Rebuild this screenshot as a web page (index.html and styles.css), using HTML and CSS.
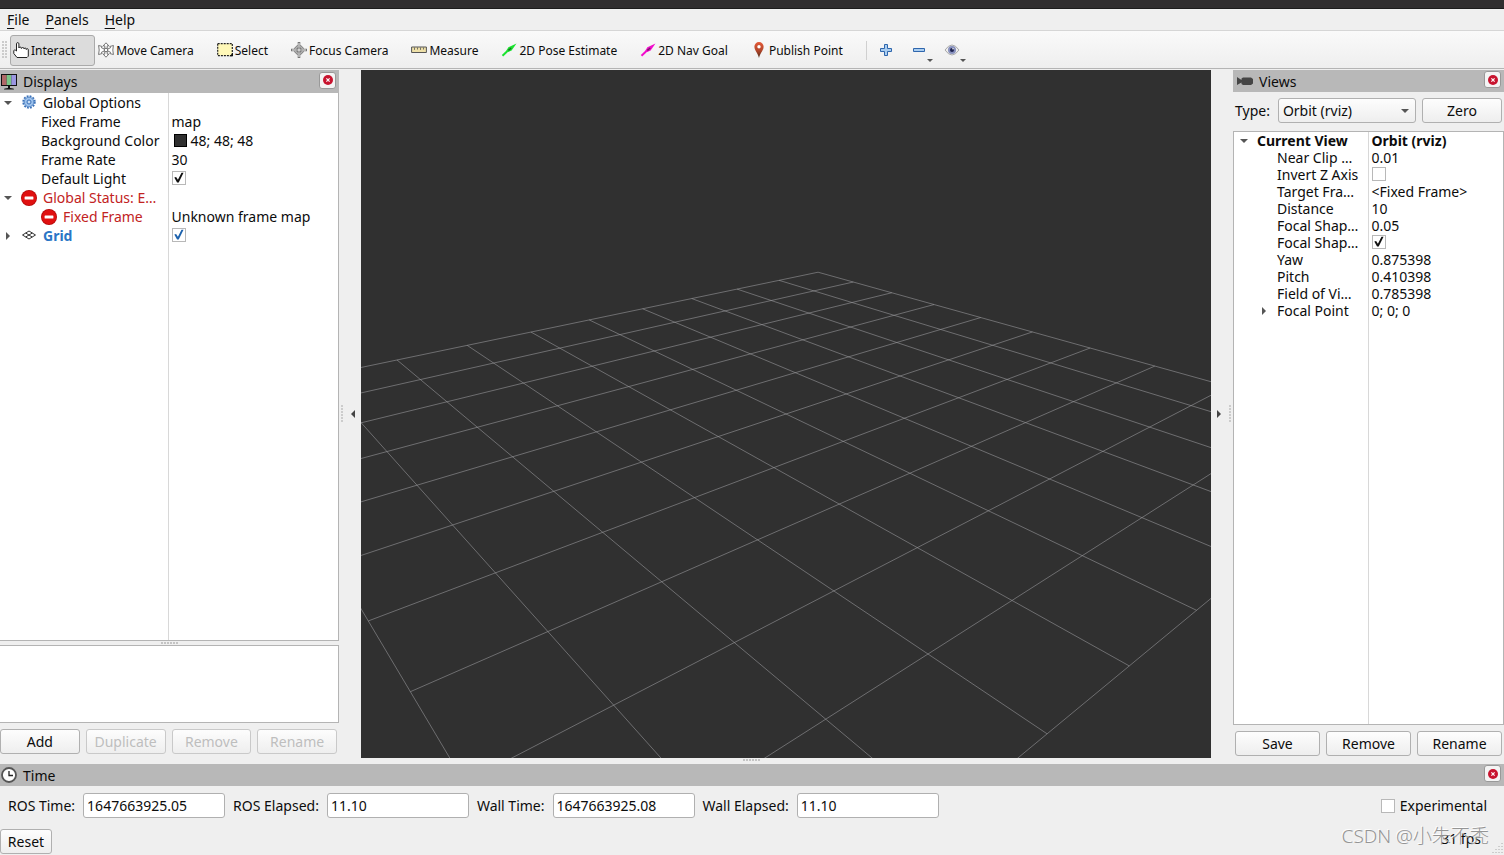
FILE: index.html
```
<!DOCTYPE html>
<html lang="en">
<head>
<meta charset="utf-8">
<title>RViz</title>
<link rel="stylesheet" href="styles.css">
</head>
<body>
<svg width="0" height="0" class="defs" aria-hidden="true">
  <symbol id="close" viewBox="0 0 10 10"><circle cx="5" cy="5" r="5" fill="#c8142f"/><path d="M3.4 3.4l3.2 3.2M6.6 3.4L3.4 6.6" stroke="#fff" stroke-width="1.2"/></symbol>
  <symbol id="stop" viewBox="0 0 16 16"><circle cx="8" cy="8" r="8" fill="#b80a0a"/><circle cx="8" cy="8" r="7.2" fill="#e01010"/><rect x="3.6" y="6.4" width="8.8" height="3.2" rx=".5" fill="#fff"/></symbol>
  <symbol id="arrow" viewBox="0 0 16 16"><path d="M1.500 13.800L7 8.600" stroke="currentColor" stroke-width="2"/><path d="M15.500 1.500L7.400 5.200 5.400 8.600 7.200 10 10.600 8.400z" fill="currentColor"/><path d="M7.400 8.400l2.800-2.400" stroke="#222" stroke-width="1.400" opacity=".6"/></symbol>
</svg>
<div class="topstrip"></div>
<nav class="menubar">
  <button><u>F</u>ile</button><button><u>P</u>anels</button><button><u>H</u>elp</button>
</nav>
<div class="toolbar" role="toolbar">
  <i class="grip"></i>
  <button class="tool active"><svg viewBox="0 0 16 16"><path d="M3.500 9V1.800c0-1.600 2.400-1.600 2.400 0V6c0-1.200 2.500-1.200 2.500 0v.5c0-1.300 2.600-1.300 2.600 0V7c0-1.300 2.300-1.200 2.300 0v.5c0-1.100 2-1 2 0V14.200l-1.300 1.300H4L.8 11.500V8.500c.6-.7 1.800-.6 2.700.5z" fill="#fff" stroke="#222"/></svg>Interact</button>
  <button class="tool"><svg viewBox="0 0 16 16"><g fill="#fff" stroke="#555" stroke-width=".8"><path d="M8 .8l2.800 3H9.200v2.600L8 7 6.800 6.400V3.800H5.200zM8 15.200l2.800-3H9.200V9.600L8 9l-1.200.6v2.600H5.200z"/><path d="M.6 3.500l3.600 1-.8 1.200L7 7.400v1.200l-3.600 1.700.8 1.200-3.600 1 .6-4.500zM15.400 3.500l-3.600 1 .8 1.200L9 7.400v1.200l3.600 1.700-.8 1.200 3.600 1-.6-4.500z"/><circle cx="8" cy="8" r="1.800"/></g></svg>Move Camera</button>
  <button class="tool"><svg viewBox="0 0 16 16"><path d="M.7 1.600h14.600v12H.7z" fill="#fff8b8" stroke="#222" stroke-width="1.200" stroke-dasharray="2 1"/><path d="M12.500 14.200H16v-3.500z" fill="#111"/></svg>Select</button>
  <button class="tool"><svg viewBox="0 0 16 16"><g fill="none" stroke="#777"><circle cx="8" cy="8" r="4.600"/><circle cx="8" cy="8" r="2.200"/><path d="M0 8h16M8 0v16" stroke-width="2.600"/><path d="M1 8h14M8 1v14" stroke="#eee" stroke-width="1"/><path d="M4 6h8M4 10h8M6 4v8M10 4v8" stroke-width=".6"/></g></svg>Focus Camera</button>
  <button class="tool"><svg viewBox="0 0 16 16"><path d="M.6 5h14.800v5.500H.6z" fill="#eee0a8" stroke="#555"/><path d="M3.500 5.500v2.400M6.500 5.500v2M9.500 5.500v2.400M12.500 5.500v2" stroke="#555" stroke-width=".8"/></svg>Measure</button>
  <button class="tool"><svg class="green"><use href="#arrow"/></svg>2D Pose Estimate</button>
  <button class="tool"><svg class="pink"><use href="#arrow"/></svg>2D Nav Goal</button>
  <button class="tool"><svg viewBox="0 0 16 16"><defs><linearGradient id="pin" x2="0" y2="1"><stop stop-color="#e45a38"/><stop offset=".55" stop-color="#b0452a"/><stop offset="1" stop-color="#4a2a18"/></linearGradient></defs><path d="M8 0a4.600 4.600 0 0 0-4.600 4.800C3.400 8.600 6.700 10.500 8 16c1.300-5.500 4.600-7.400 4.600-11.200A4.600 4.600 0 0 0 8 0z" fill="url(#pin)"/><circle cx="8" cy="4.800" r="1.700" fill="#fff"/></svg>Publish Point</button>
  <i class="sep"></i>
  <button class="mini" aria-label="Add tool"><svg viewBox="0 0 16 16"><path d="M6.500 2.500h3v4h4v3h-4v4h-3v-4h-4v-3h4z" fill="#a9cdf0" stroke="#2f66ad"/></svg></button>
  <button class="mini" aria-label="Remove tool"><svg viewBox="0 0 16 16"><path d="M2.500 6.500h11v3h-11z" fill="#a9cdf0" stroke="#2f66ad"/></svg><i class="drop"></i></button>
  <button class="mini" aria-label="Tool visibility"><svg viewBox="0 0 16 16"><path d="M1 8q7-10 14 0-7 10-14 0z" fill="#ededed" stroke="#aaa"/><circle cx="8" cy="8" r="4" fill="#8790bd"/><circle cx="8" cy="8" r="2" fill="#1d2350"/><circle cx="9" cy="6.800" r=".8" fill="#fff"/></svg><i class="drop"></i></button>
</div>
<main class="work">
  <section class="dock left">
    <h2 class="title"><svg viewBox="0 0 16 16"><path d="M0 0h16v12H0z" fill="#111"/><path d="M1 1h4.700v10H1z" fill="#b06868"/><path d="M5.700 1h4.600v10H5.700z" fill="#79c586"/><path d="M10.300 1H15v10h-4.700z" fill="#9a96e0"/><path d="M7 12h2v2q4 0 4 1.500H3Q3 14 7 14z" fill="#111"/></svg>Displays<button class="close" aria-label="Close Displays"><svg><use href="#close"/></svg></button></h2>
    <div class="tree">
      <table class="props displays">
        <colgroup><col class="names"><col></colgroup>
        <tr><td><span class="cell"><button class="exp open" aria-label="Collapse"></button><svg class="ico" viewBox="0 0 16 16"><circle cx="8" cy="7" r="5.700" fill="none" stroke="#3b71b8" stroke-width="2" stroke-dasharray="1.800 1.180"/><circle cx="8" cy="7" r="4.800" fill="#9cc1ec" stroke="#5b8dca"/><circle cx="8" cy="7" r="2" fill="#c9def5" stroke="#3b71b8"/></svg>Global Options</span></td><td></td></tr>
        <tr><td><span class="cell child">Fixed Frame</span></td><td>map</td></tr>
        <tr><td><span class="cell child">Background Color</span></td><td><span class="cell"><i class="swatch"></i>48; 48; 48</span></td></tr>
        <tr><td><span class="cell child">Frame Rate</span></td><td>30</td></tr>
        <tr><td><span class="cell child"><label for="light">Default Light</label></span></td><td><input class="check" id="light" type="checkbox" checked></td></tr>
        <tr class="error"><td><span class="cell"><button class="exp open" aria-label="Collapse"></button><svg class="ico"><use href="#stop"/></svg>Global Status: E…</span></td><td></td></tr>
        <tr class="error"><td><span class="cell child"><svg class="ico"><use href="#stop"/></svg>Fixed Frame</span></td><td class="plain">Unknown frame map</td></tr>
        <tr class="grid-row"><td><span class="cell"><button class="exp" aria-label="Expand"></button><svg class="ico" viewBox="0 0 16 16"><path d="M1.500 7L8 3l6.500 4L8 11zM4.700 5l6.500 4M11.300 5L4.700 9" fill="none" stroke="#333"/></svg><label for="grid">Grid</label></span></td><td><input class="check blue" id="grid" type="checkbox" checked></td></tr>
        <tr class="fill"><td></td><td></td></tr>
      </table>
    </div>
    <i class="hgrip"></i>
    <div class="desc"></div>
    <div class="buttons"><button class="btn">Add</button><button class="btn" disabled>Duplicate</button><button class="btn" disabled>Remove</button><button class="btn" disabled>Rename</button></div>
  </section>
  <div class="gutter"><i class="vgrip"></i><button class="collapse to-left" aria-label="Hide left dock"></button></div>
  <svg class="view" id="view" role="img" aria-label="3D view"></svg>
  <div class="gutter"><button class="collapse to-right" aria-label="Hide right dock"></button><i class="vgrip"></i></div>
  <section class="dock right">
    <h2 class="title"><svg viewBox="0 0 16 16"><path d="M0 4l4.500 3V5.500L6 4.500h8l2 1.500v4.500l-2 1.500H6l-1.500-1V9.500L0 12z" fill="#454545"/></svg>Views<button class="close" aria-label="Close Views"><svg><use href="#close"/></svg></button></h2>
    <div class="type"><label for="type">Type:</label><span class="combo"><select id="type"><option>Orbit (rviz)</option></select></span><button class="btn">Zero</button></div>
    <div class="tree">
      <table class="props views">
        <colgroup><col class="names"><col></colgroup>
        <tr class="head"><td><span class="cell"><button class="exp open" aria-label="Collapse"></button>Current View</span></td><td>Orbit (rviz)</td></tr>
        <tr><td><span class="cell child">Near Clip …</span></td><td>0.01</td></tr>
        <tr><td><span class="cell child"><label for="invert">Invert Z Axis</label></span></td><td><input class="check" id="invert" type="checkbox"></td></tr>
        <tr><td><span class="cell child">Target Fra…</span></td><td>&lt;Fixed Frame&gt;</td></tr>
        <tr><td><span class="cell child">Distance</span></td><td>10</td></tr>
        <tr><td><span class="cell child">Focal Shap…</span></td><td>0.05</td></tr>
        <tr><td><span class="cell child"><label for="shape">Focal Shap…</label></span></td><td><input class="check" id="shape" type="checkbox" checked></td></tr>
        <tr><td><span class="cell child">Yaw</span></td><td>0.875398</td></tr>
        <tr><td><span class="cell child">Pitch</span></td><td>0.410398</td></tr>
        <tr><td><span class="cell child">Field of Vi…</span></td><td>0.785398</td></tr>
        <tr><td><span class="cell nested"><button class="exp" aria-label="Expand"></button>Focal Point</span></td><td>0; 0; 0</td></tr>
        <tr class="fill"><td></td><td></td></tr>
      </table>
    </div>
    <div class="buttons"><button class="btn">Save</button><button class="btn">Remove</button><button class="btn">Rename</button></div>
  </section>
</main>
<i class="hgrip bottom"></i>
<section class="time">
  <h2 class="title"><svg viewBox="0 0 16 16"><circle cx="8" cy="8" r="7" fill="#fff" stroke="#555" stroke-width="1.800"/><path d="M8 4v4.500h4" fill="none" stroke="#222" stroke-width="1.300"/></svg>Time<button class="close" aria-label="Close Time"><svg><use href="#close"/></svg></button></h2>
  <div class="clocks">
    <label for="rt">ROS Time:</label><input class="field" id="rt" value="1647663925.05">
    <label for="re">ROS Elapsed:</label><input class="field" id="re" value="11.10">
    <label for="wt">Wall Time:</label><input class="field" id="wt" value="1647663925.08">
    <label for="we">Wall Elapsed:</label><input class="field" id="we" value="11.10">
    <label class="exper"><input class="check" type="checkbox">Experimental</label>
  </div>
  <div class="status"><button class="btn">Reset</button><span class="fps">31 fps</span></div>
</section>
<div class="watermark">CSDN @小朱不秃</div>
<svg class="resize" viewBox="0 0 12 12" aria-hidden="true"><path d="M10 1v10M7 4v7M4 7v4M1 10v1" stroke="#aaa" stroke-dasharray="1 2"/></svg>
<script src="view.js"></script>
</body>
</html>
```
FILE: styles.css
```
* { box-sizing: border-box; }
body {
  margin: 0;
  min-height: 100vh;
  display: flex;
  flex-direction: column;
  background: #efefef;
  color: #0c0c0c;
  font: 14px/19px "Noto Sans", "Noto Sans CJK SC", sans-serif;
}
button, input, select { font: inherit; color: inherit; margin: 0; }
button { padding: 0; border: 0; background: none; }
i { display: block; }
svg { display: block; flex: none; }
.defs { position: absolute; }

.topstrip { height: 9px; background: #302e2f; border-bottom: 1px solid #1c1c1c; }
.menubar { display: flex; gap: 16px; height: 21px; padding: 0 7px; line-height: 21px; }
.menubar u { text-underline-offset: 3px; text-decoration-thickness: 1px; }

.toolbar {
  display: flex;
  align-items: center;
  height: 39px;
  padding: 1px 0 0 2px;
  border-top: 1px solid #d6d6d6;
  border-bottom: 1px solid #b4b4b4;
  background: linear-gradient(#fafafa, #eee);
  font-size: 12px;
}
.grip { width: 6px; height: 18px; margin-right: 2px; background: radial-gradient(circle at 1px 1px, #ccc 1px, transparent 1px) 0 0 / 3px 3px; }
.tool {
  display: flex;
  align-items: center;
  gap: 2px;
  height: 31px;
  padding: 0 19px 0 2px;
  border: 1px solid transparent;
  border-radius: 3px;
  white-space: nowrap;
}
.tool svg, .mini svg { width: 16px; height: 16px; }
.active { background: #dcdcdc; border-color: #aaa; }
.green { color: #19e32e; }
.pink { color: #f20ccc; }
.sep { width: 1px; height: 19px; margin: 0 11px 0 3px; background: #d0d0d0; }
.mini { position: relative; width: 33px; padding-right: 17px; }
.drop { position: absolute; right: 11px; bottom: -4px; border: 3px solid transparent; border-top-color: #555; border-bottom: 0; }

.work { flex: 1; display: flex; padding-top: 1px; min-height: 0; }
.dock { display: flex; flex-direction: column; }
.left { width: 339px; }
.right { width: 271px; }
.view { flex: 1; min-width: 0; width: 0; background: #303030; }
.view line { stroke: #a0a0a4; stroke-opacity: .55; }

.title {
  display: flex;
  align-items: center;
  gap: 6px;
  height: 23px;
  margin: 0;
  padding: 0 3px 0 1px;
  background: #b8b8b8;
  font-size: 14px;
  font-weight: 400;
}
.title > svg { width: 16px; height: 16px; }
.right .title { height: 22px; padding-left: 4px; }
.close {
  display: grid;
  place-items: center;
  width: 17px;
  height: 17px;
  margin: 0 0 3px auto;
  border: 1px solid #999;
  border-radius: 3px;
  background: #f4f4f4;
}
.close svg { width: 10px; height: 10px; }

.tree { flex: 1; background: #fff; border: 1px solid #b4b4b4; }
.left .tree { border-width: 0 1px 1px 0; }
.props { width: 100%; height: 100%; border-collapse: collapse; table-layout: fixed; }
.props td { padding: 0 0 0 3px; height: 19px; line-height: 19px; white-space: nowrap; }
.props td:first-child { padding: 0; border-right: 1px solid #d8d8d8; }
.views td { height: 17px; line-height: 17px; }
.props .fill td { height: auto; }
.displays .names { width: 168px; }
.views .names { width: 134px; }
.cell { display: flex; align-items: center; }
.displays .child { padding-left: 41px; }
.views .child { padding-left: 43px; }
.views .nested { padding-left: 20px; }
.ico { width: 16px; height: 16px; margin-right: 6px; }
.exp { display: flex; align-items: center; justify-content: center; width: 16px; height: 16px; margin-right: 5px; }
.views .exp { width: 20px; margin-right: 3px; }
.exp::before { content: ""; border: 4px solid transparent; border-left-color: #555; border-right: 0; }
.exp.open::before { border: 4px solid transparent; border-top-color: #555; border-bottom: 0; }
.swatch { width: 13px; height: 13px; margin: 0 4px 0 2px; background: #303030; border: 1px solid #000; }
.error { color: #c22323; }
.error .plain { color: #0c0c0c; }
.grid-row { color: #2a76c6; font-weight: 700; }
.head { font-weight: 700; }
.check {
  appearance: none;
  display: block;
  width: 14px;
  height: 14px;
  border: 1px solid #b8b8b8;
  background: #fff;
  color: #111;
}
.props .check { margin-bottom: 2px; }
.check:checked::before {
  content: "";
  display: block;
  width: 12px;
  height: 12px;
  background: currentColor;
  clip-path: polygon(15% 50%, 30% 45%, 45% 68%, 75% 10%, 92% 10%, 52% 92%, 38% 92%);
}
.check.blue { color: #1d62ad; }

.btn {
  height: 25px;
  border: 1px solid #b0b0b0;
  border-radius: 3px;
  background: linear-gradient(#fdfdfd, #eee);
}
.btn:disabled { color: #bebebe; border-color: #c9c9c9; }
.buttons { display: flex; gap: 6px; padding: 6px 2px 2px; }
.buttons .btn { flex: 1; }
.left .buttons { padding: 6px 2px 4px 0; }
.desc { height: 78px; background: #fff; border: 1px solid #b4b4b4; border-left: 0; }
.hgrip { width: 18px; height: 4px; margin: 0 auto; background: radial-gradient(circle at 1px 2px, #c4c4c4 1px, transparent 1px) 0 0 / 3px 4px; }
.hgrip.bottom { height: 6px; background-size: 3px 6px; }
.gutter { width: 22px; display: flex; align-items: center; justify-content: space-between; padding: 0 6px 0 1px; }
.vgrip { width: 4px; height: 18px; background: radial-gradient(circle at 2px 1px, #ccc 1px, transparent 1px) 0 0 / 4px 3px; }
.collapse::before { content: ""; display: block; border: 4px solid transparent; }
.to-left::before { border-right-color: #444; border-left: 0; }
.to-right::before { border-left-color: #444; border-right: 0; }
.view + .gutter { padding: 0 1px 0 6px; }

.type { display: flex; align-items: center; gap: 6px; padding: 6px 2px 8px; }
.type label { padding-right: 2px; }
.type .btn { width: 80px; }
.combo { position: relative; flex: 1; display: flex; }
.combo::after { content: ""; position: absolute; right: 7px; top: 11px; border: 4px solid transparent; border-top-color: #555; border-bottom: 0; pointer-events: none; }
.combo select { appearance: none; width: 100%; height: 25px; padding: 0 4px; border: 1px solid #b0b0b0; border-radius: 3px; background: linear-gradient(#fdfdfd, #eee); }

.time .title { height: 22px; }
.clocks { display: flex; align-items: center; gap: 8px; padding: 7px 17px 0 8px; }
.field { width: 142px; height: 25px; padding: 0 3px; border: 1px solid #b0b0b0; border-radius: 3px; background: #fff; }
.exper { display: flex; align-items: center; gap: 5px; margin-left: auto; }
.status { display: flex; justify-content: space-between; align-items: flex-start; padding: 11px 23px 1px 0; }
.status .btn { width: 52px; }
.fps { font-size: 14px; }
.watermark { position: absolute; right: 15px; bottom: 6px; color: #8c8c8c; font: 300 19px/26px "Noto Sans", "Noto Sans CJK SC", sans-serif; text-shadow: -1px -1px #fff; opacity: .9; pointer-events: none; }
.resize { position: absolute; right: 0; bottom: 1px; width: 12px; height: 12px; }
```
FILE: view.js
```
// Orbit camera looking at the origin of a 10 x 10 ground grid.
const camera = { yaw: 0.875398, pitch: 0.410398, distance: 10, fov: 0.785398 };
const view = document.getElementById("view");

function project(x, y, width, height) {
  const cy = Math.cos(camera.yaw), sy = Math.sin(camera.yaw);
  const cp = Math.cos(camera.pitch), sp = Math.sin(camera.pitch);
  const toward = x * cy + y * sy;
  const depth = camera.distance - toward * cp;
  const scale = height / 2 / Math.tan(camera.fov / 2) / depth;
  return [width / 2 + (y * cy - x * sy) * scale, height / 2 + toward * sp * scale];
}

function draw() {
  const { width, height } = view.getBoundingClientRect();
  view.replaceChildren();
  const addLine = (a, b) => {
    const line = document.createElementNS("http://www.w3.org/2000/svg", "line");
    const [x1, y1] = project(...a, width, height);
    const [x2, y2] = project(...b, width, height);
    Object.entries({ x1, y1, x2, y2 }).forEach(([k, v]) => line.setAttribute(k, v));
    view.append(line);
  };
  for (let i = -5; i <= 5; i++) {
    addLine([i, -5], [i, 5]);
    addLine([-5, i], [5, i]);
  }
}

draw();
window.addEventListener("resize", draw);
```
